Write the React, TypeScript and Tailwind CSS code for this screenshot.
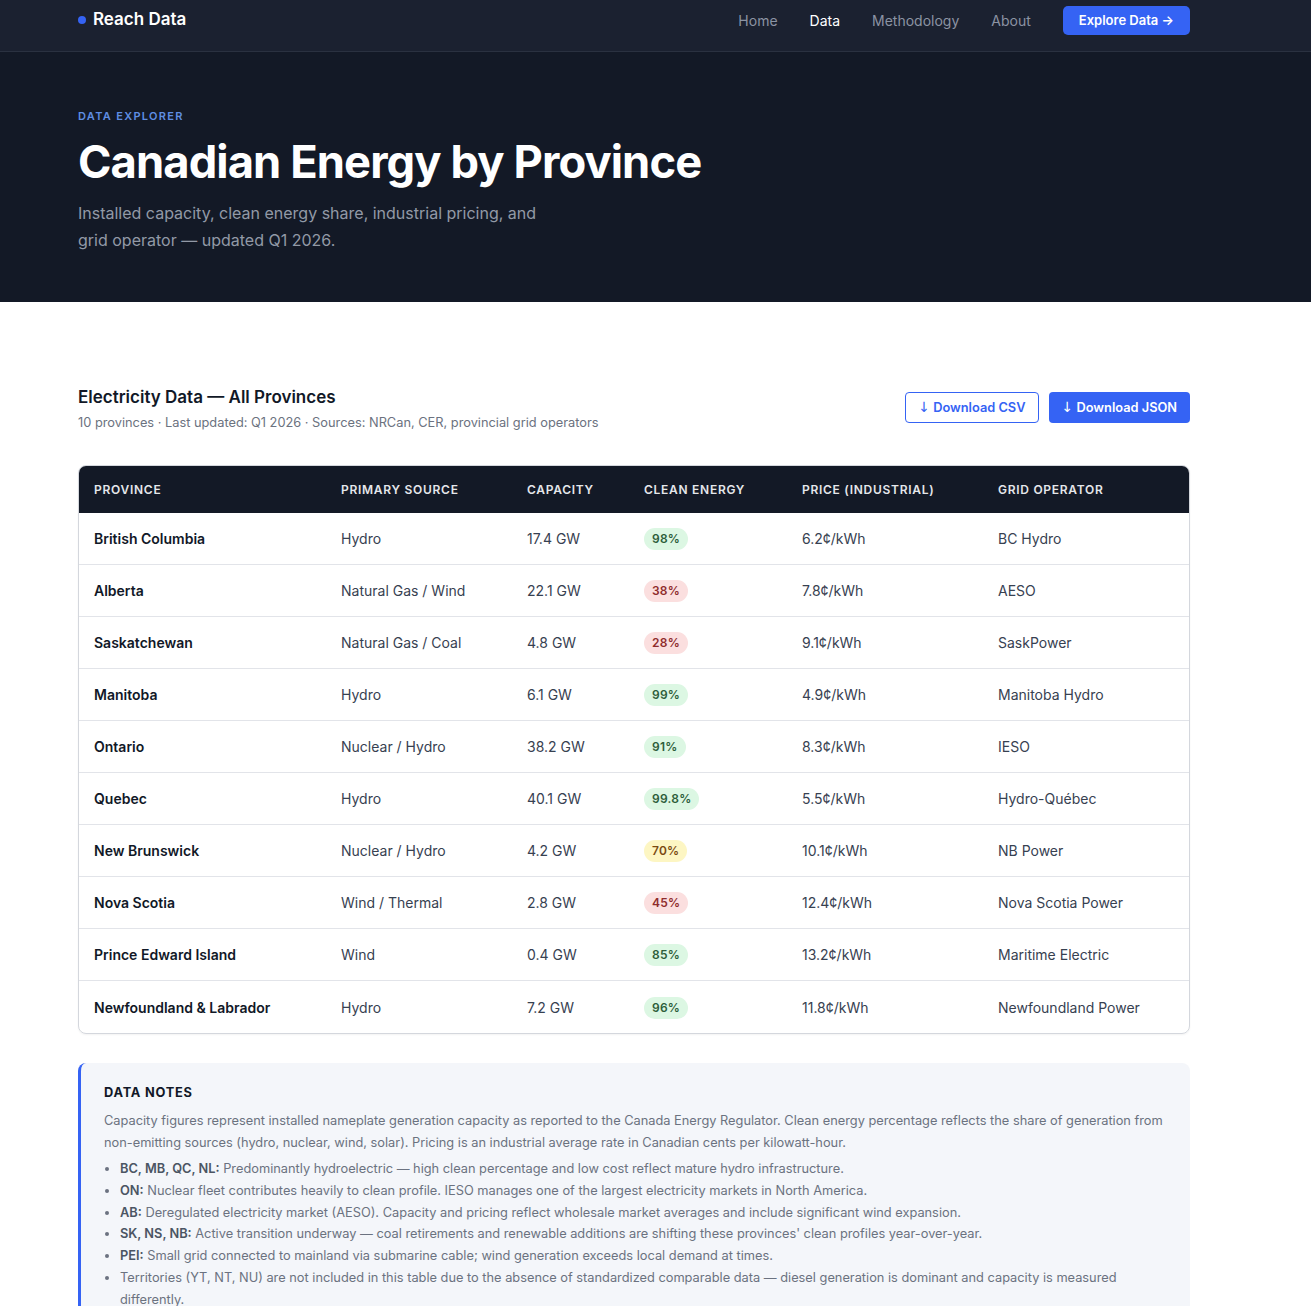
const provinces = [
  { name: "British Columbia", source: "Hydro", capacity: "17.4 GW", clean: "98%", tone: "green", price: "6.2¢/kWh", operator: "BC Hydro" },
  { name: "Alberta", source: "Natural Gas / Wind", capacity: "22.1 GW", clean: "38%", tone: "red", price: "7.8¢/kWh", operator: "AESO" },
  { name: "Saskatchewan", source: "Natural Gas / Coal", capacity: "4.8 GW", clean: "28%", tone: "red", price: "9.1¢/kWh", operator: "SaskPower" },
  { name: "Manitoba", source: "Hydro", capacity: "6.1 GW", clean: "99%", tone: "green", price: "4.9¢/kWh", operator: "Manitoba Hydro" },
  { name: "Ontario", source: "Nuclear / Hydro", capacity: "38.2 GW", clean: "91%", tone: "green", price: "8.3¢/kWh", operator: "IESO" },
  { name: "Quebec", source: "Hydro", capacity: "40.1 GW", clean: "99.8%", tone: "green", price: "5.5¢/kWh", operator: "Hydro-Québec" },
  { name: "New Brunswick", source: "Nuclear / Hydro", capacity: "4.2 GW", clean: "70%", tone: "yellow", price: "10.1¢/kWh", operator: "NB Power" },
  { name: "Nova Scotia", source: "Wind / Thermal", capacity: "2.8 GW", clean: "45%", tone: "red", price: "12.4¢/kWh", operator: "Nova Scotia Power" },
  { name: "Prince Edward Island", source: "Wind", capacity: "0.4 GW", clean: "85%", tone: "green", price: "13.2¢/kWh", operator: "Maritime Electric" },
  { name: "Newfoundland & Labrador", source: "Hydro", capacity: "7.2 GW", clean: "96%", tone: "green", price: "11.8¢/kWh", operator: "Newfoundland Power" },
];

const badgeTone: Record<string, string> = {
  green: "bg-[#dcf7e3] text-[#2d5e3a]",
  red: "bg-[#fbdfdf] text-[#8f2c2c]",
  yellow: "bg-[#fdf6c3] text-[#7a4a12]",
};

const notes = [
  { lead: "BC, MB, QC, NL:", text: " Predominantly hydroelectric — high clean percentage and low cost reflect mature hydro infrastructure." },
  { lead: "ON:", text: " Nuclear fleet contributes heavily to clean profile. IESO manages one of the largest electricity markets in North America." },
  { lead: "AB:", text: " Deregulated electricity market (AESO). Capacity and pricing reflect wholesale market averages and include significant wind expansion." },
  { lead: "SK, NS, NB:", text: " Active transition underway — coal retirements and renewable additions are shifting these provinces' clean profiles year-over-year." },
  { lead: "PEI:", text: " Small grid connected to mainland via submarine cable; wind generation exceeds local demand at times." },
  { lead: "", text: "Territories (YT, NT, NU) are not included in this table due to the absence of standardized comparable data — diesel generation is dominant and capacity is measured differently." },
];

const cols = "grid grid-cols-[247px_186px_117px_158px_196px_1fr]";

const App = () => {
  return (
    <div className="min-h-screen bg-white font-['Inter',sans-serif] text-[#111827]">
      {/* nav */}
      <div className="h-[52px] border-b border-[#2a3140] bg-[#1b2130]">
        <div className="ml-[78px] flex h-full w-[1112px] items-center justify-between pb-[11px] pt-[6px]">
          <div className="flex items-center gap-[7px] self-start pt-[5px]">
            <span className="h-[8px] w-[8px] rounded-full bg-[#3563f4]" />
            <span className="text-[17px] font-semibold leading-none text-white">Reach Data</span>
          </div>
          <div className="flex items-center self-start">
            <a className="text-[14px] text-[#8b93a3]">Home</a>
            <a className="ml-[32px] text-[14px] text-white">Data</a>
            <a className="ml-[32px] text-[14px] text-[#8b93a3]">Methodology</a>
            <a className="ml-[32px] text-[14px] text-[#8b93a3]">About</a>
            <button className="ml-[32px] h-[29px] rounded-[5px] bg-[#3563f4] px-[16px] text-[13px] font-semibold text-white">
              Explore Data →
            </button>
          </div>
        </div>
      </div>

      {/* hero */}
      <div className="h-[250px] bg-[#131926]">
        <div className="ml-[78px] w-[1112px] pt-[57px]">
          <p className="text-[11px] font-semibold uppercase leading-[14px] tracking-[0.12em] text-[#5f8ee3]">Data Explorer</p>
          <h1 className="mt-[12px] text-[45.3px] font-bold leading-[54px] tracking-[-0.02em] text-white">
            Canadian Energy by Province
          </h1>
          <p className="mt-[11px] w-[470px] text-[16px] leading-[27px] text-[#9299a6]">
            Installed capacity, clean energy share, industrial pricing, and grid operator — updated Q1 2026.
          </p>
        </div>
      </div>

      {/* data section */}
      <div className="ml-[78px] w-[1112px] pt-[84px] pb-[20px]">
        <div className="flex items-start justify-between">
          <div>
            <h2 className="text-[17px] font-semibold leading-[22px] text-[#111827]">Electricity Data — All Provinces</h2>
            <p className="mt-[5px] text-[12.8px] text-[#6b7280]">
              10 provinces · Last updated: Q1 2026 · Sources: NRCan, CER, provincial grid operators
            </p>
          </div>
          <div className="mt-[6px] flex gap-[10px]">
            <button className="h-[31px] rounded-[4px] border border-[#3563f4] bg-white px-[12px] text-[12.8px] font-semibold text-[#3563f4]">
              <span className="font-['DejaVu_Sans'] text-[14px] font-normal">↓</span> Download CSV
            </button>
            <button className="h-[31px] rounded-[4px] bg-[#3563f4] px-[13px] text-[12.8px] font-semibold text-white">
              <span className="font-['DejaVu_Sans'] text-[14px] font-normal">↓</span> Download JSON
            </button>
          </div>
        </div>

        <div className="mt-[33px] overflow-hidden rounded-[8px] border border-[#d4d7dd] shadow-[0_1px_2px_rgba(0,0,0,0.05)]">
          <div className={`${cols} h-[47px] items-center bg-[#131926] px-[15px]`}>
            {["Province", "Primary Source", "Capacity", "Clean Energy", "Price (Industrial)", "Grid Operator"].map((h) => (
              <div key={h} className="text-[12px] font-semibold uppercase tracking-[0.06em] text-[#e5e7eb]">
                {h}
              </div>
            ))}
          </div>
          {provinces.map((p, key) => (
            <div
              key={key}
              className={`${cols} h-[52px] items-center px-[15px] text-[14px] ${
                key === provinces.length - 1 ? "" : "border-b border-[#e2e4e9]"
              }`}
            >
              <div className="font-semibold text-[#111827]">{p.name}</div>
              <div className="text-[#374151]">{p.source}</div>
              <div className="text-[#374151]">{p.capacity}</div>
              <div>
                <span className={`inline-flex h-[22px] items-center rounded-full px-[8px] text-[12px] font-semibold tracking-[0.02em] ${badgeTone[p.tone]}`}>
                  {p.clean}
                </span>
              </div>
              <div className="text-[#374151]">{p.price}</div>
              <div className="text-[#374151]">{p.operator}</div>
            </div>
          ))}
        </div>

        {/* notes */}
        <div className="mt-[29px] rounded-[8px] border-l-[3px] border-[#3563f4] bg-[#f4f6fa] pb-[16px] pl-[23px] pr-[24px] pt-[20px]">
          <h3 className="text-[12.8px] font-bold uppercase tracking-[0.06em] text-[#111827]">Data Notes</h3>
          <p className="mt-[8px] text-[12.8px] leading-[22px] text-[#6b7280]">
            Capacity figures represent installed nameplate generation capacity as reported to the Canada Energy Regulator. Clean energy percentage reflects the share of generation from non-emitting sources (hydro, nuclear, wind, solar). Pricing is an industrial average rate in Canadian cents per kilowatt-hour.
          </p>
          <ul className="mt-[4px] list-disc pl-[16px] text-[12.8px] leading-[21.7px] text-[#6b7280]">
            {notes.map((n, i) => (
              <li key={i}>
                {n.lead && <strong className="font-semibold text-[#4b5563]">{n.lead}</strong>}
                {n.text}
              </li>
            ))}
          </ul>
        </div>
      </div>
    </div>
  );
};

export default App;
